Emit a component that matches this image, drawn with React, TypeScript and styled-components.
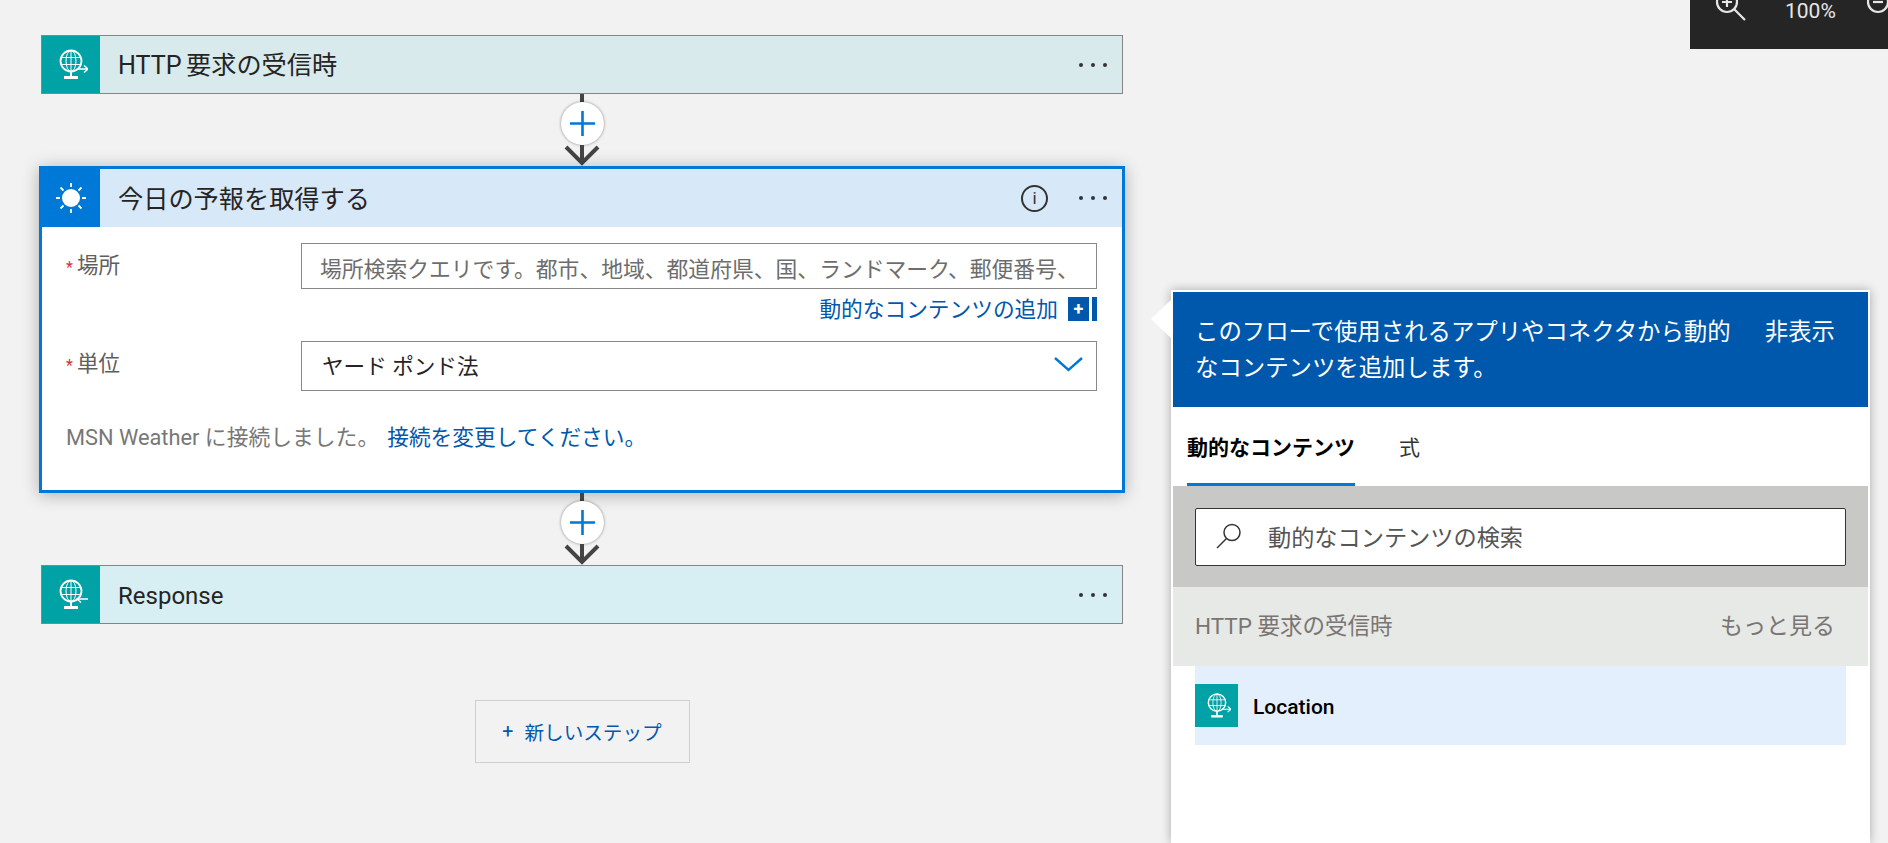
import styled, { createGlobalStyle } from "styled-components";

const Global = createGlobalStyle`
  html, body { margin: 0; padding: 0; background: #f2f2f2; }
  body {
    font-family: Roboto, "Noto Sans CJK JP", sans-serif;
    color: #252423;
  }
  * { box-sizing: border-box; }
`;

const Page = styled.div`
  position: relative;
  width: 1888px;
  height: 843px;
  overflow: hidden;
  display: flex;
  background: #f2f2f2;
`;

const ZoomBar = styled.div`
  position: absolute;
  top: 0;
  right: 0;
  width: 198px;
  height: 49px;
  background: #252525;
  color: #e6e6e6;
  font-size: 21px;
  line-height: 22px;
  overflow: hidden;
`;

const ZoomIcon = styled.svg`
  position: absolute;
  top: -10px;
  left: 24px;
`;

const ZoomOutIcon = styled.svg`
  position: absolute;
  top: -10px;
  left: 172px;
`;

const ZoomValue = styled.span`
  position: absolute;
  top: 0;
  left: 95px;
`;

const FlowColumn = styled.div`
  width: 1086px;
  margin-left: 39px;
  padding-top: 35px;
  display: flex;
  flex-direction: column;
  align-items: stretch;
  flex-shrink: 0;
`;

const Card = styled.div<{ $bg: string }>`
  margin: 0 2px;
  height: 59px;
  display: flex;
  align-items: center;
  background: ${({ $bg }) => $bg};
  border: 1px solid #858585;
`;

const IconBox = styled.div<{ $bg: string; $w?: number }>`
  width: ${({ $w }) => $w ?? 58}px;
  align-self: stretch;
  flex-shrink: 0;
  display: flex;
  align-items: center;
  justify-content: center;
  background: ${({ $bg }) => $bg};
`;

const Title = styled.div`
  flex: 1;
  padding: 3px 0 0 18px;
  font-size: 25.2px;
  line-height: 30px;
  word-spacing: -2px;
  color: #252423;
  white-space: nowrap;
`;

const LatinTitle = styled(Title)`
  font-size: 24px;
`;

const Dots = styled.div`
  display: flex;
  gap: 8px;
  margin-right: 15px;
`;

const Dot = styled.i`
  width: 4px;
  height: 4px;
  border-radius: 50%;
  background: #333;
`;

const SelectedCard = styled.div`
  height: 327px;
  border: 3px solid #0078d7;
  background: #fff;
  box-shadow: 0 2px 16px rgba(0, 0, 0, 0.28);
`;

const SelectedHeader = styled.div`
  height: 58px;
  display: flex;
  align-items: center;
  background: #d7e8f8;
`;

const InfoIcon = styled.div`
  width: 27px;
  height: 27px;
  margin-right: 31px;
  border: 2px solid #333;
  border-radius: 50%;
  font-size: 17px;
  line-height: 22px;
  text-align: center;
  color: #333;
`;

const CardBody = styled.div`
  padding: 16px 25px 0 24px;
`;

const FieldRow = styled.div`
  display: flex;
  align-items: flex-start;
`;

const Label = styled.div`
  width: 235px;
  flex-shrink: 0;
  padding-top: 8px;
  font-size: 21.5px;
  line-height: 30px;
  color: #605e5c;
`;

const Required = styled.span`
  color: #d13438;
  font-size: 16px;
  margin-right: 4px;
`;

const TextBox = styled.div`
  flex: 1;
  height: 46px;
  display: flex;
  align-items: center;
  padding: 3px 0 0 18px;
  border: 1px solid #8a8886;
  font-size: 21.8px;
  color: #6d6d6d;
  white-space: nowrap;
  overflow: hidden;
`;

const SelectBox = styled(TextBox)`
  height: 50px;
  justify-content: space-between;
  padding: 0 13px 4px 20px;
  font-size: 21.6px;
  color: #252423;
`;

const AddRow = styled.div`
  display: flex;
  justify-content: flex-end;
  align-items: center;
  height: 24px;
  margin: 8px 0 20px;
`;

const BlueLink = styled.span`
  color: #0058ad;
  font-size: 21.7px;
  white-space: nowrap;
`;

const AddLink = styled(BlueLink)`
  margin-top: -4px;
`;

const AddButton = styled.span`
  width: 29px;
  height: 24px;
  margin-left: 10px;
  display: flex;
  justify-content: space-between;
`;

const AddPlus = styled.span`
  width: 21px;
  background: #0058ad;
  color: #fff;
  font-size: 18px;
  font-weight: 700;
  line-height: 23px;
  text-align: center;
`;

const AddEdge = styled.span`
  width: 5px;
  background: #0058ad;
`;

const ConnectionNote = styled.div`
  margin-top: 32px;
  display: flex;
  gap: 8px;
  font-size: 21.8px;
  line-height: 30px;
  color: #777;
`;

const Connector = styled.div`
  height: 72px;
  display: flex;
  flex-direction: column;
  align-items: center;
`;

const Stem = styled.div`
  width: 4px;
  height: 8px;
  background: #444;
`;

const PlusCircle = styled.div`
  width: 43px;
  height: 43px;
  border-radius: 50%;
  background: #fff;
  box-shadow: 0 0 3px rgba(0, 0, 0, 0.45);
  display: flex;
  align-items: center;
  justify-content: center;
`;

const NewStep = styled.div`
  align-self: center;
  width: 215px;
  height: 63px;
  margin-top: 76px;
  display: flex;
  align-items: center;
  justify-content: center;
  gap: 11px;
  border: 1px solid #cfcfcf;
  color: #0058ad;
  font-size: 19.6px;
`;

const Panel = styled.div`
  position: relative;
  width: 699px;
  margin: 290px 0 0 46px;
  height: 553px;
  flex-shrink: 0;
  background: #fff;
  border: 2px solid #fff;
  border-bottom: 0;
  box-shadow: 0 0 10px rgba(0, 0, 0, 0.3);
`;

const PanelArrow = styled.div`
  position: absolute;
  top: 8px;
  left: -22px;
  width: 0;
  height: 0;
  border-top: 19px solid transparent;
  border-bottom: 19px solid transparent;
  border-right: 20px solid #fff;
`;

const PanelHeader = styled.div`
  height: 115px;
  background: #0058ad;
  color: #fff;
  display: flex;
  justify-content: space-between;
  padding: 22px 33px 0 22px;
  font-size: 23.4px;
  line-height: 36px;
`;

const PanelIntro = styled.div`
  width: 545px;
`;

const Tabs = styled.div`
  height: 79px;
  padding-left: 14px;
  display: flex;
  gap: 44px;
`;

const Tab = styled.div<{ $active?: boolean }>`
  height: 79px;
  padding-top: 23px;
  font-size: 21px;
  line-height: 36px;
  font-weight: ${({ $active }) => ($active ? 700 : 400)};
  color: ${({ $active }) => ($active ? "#000" : "#333")};
  border-bottom: 3px solid ${({ $active }) => ($active ? "#0078d7" : "transparent")};
`;

const SearchWrap = styled.div`
  height: 101px;
  padding: 22px 22px 0;
  background: #c8c9c6;
`;

const SearchBox = styled.div`
  height: 58px;
  display: flex;
  align-items: center;
  gap: 26px;
  padding: 0 0 2px 20px;
  border: 1px solid #333;
  border-radius: 2px;
  background: #fff;
  font-size: 23.2px;
  color: #555;
`;

const SectionHeader = styled.div`
  height: 79px;
  padding: 0 33px 5px 22px;
  display: flex;
  align-items: center;
  justify-content: space-between;
  background: #e7e9e6;
  font-size: 22.5px;
  color: #7a7574;
`;

const MoreLink = styled.span`
  font-size: 23px;
`;

const TokenRow = styled.div`
  margin: 0 22px;
  height: 79px;
  display: flex;
  align-items: center;
  gap: 15px;
  background: #e3effd;
  font-size: 21px;
  font-weight: 500;
  color: #000;
`;

const TokenIcon = styled(IconBox)`
  height: 43px;
  align-self: center;
`;

const TokenName = styled.span`
  padding-top: 2px;
`;

function GlobeIcon({ size, back }: { size: number; back?: boolean }) {
  return (
    <svg width={size} height={size} viewBox="0 0 34 34" fill="none" stroke="#fff">
      <circle cx="17" cy="13" r="10.5" strokeWidth="1.8" />
      <ellipse cx="17" cy="13" rx="5" ry="10.5" strokeWidth="1" />
      <path d="M7 9.5h20M7 16.5h20M17 2.5v21" strokeWidth="1" />
      <path d="M17 24v4" strokeWidth="2" />
      <path d="M10 29.5h14" strokeWidth="3" />
      {back ? (
        <path d="M34 21H23M27 17.5 23 21l4 3.5" strokeWidth="1.4" />
      ) : (
        <path d="M23 21h11M30 17.5l4 3.5-4 3.5" strokeWidth="1.4" />
      )}
    </svg>
  );
}

function SunIcon() {
  return (
    <svg width="32" height="32" viewBox="0 0 32 32" fill="#fff" stroke="#fff">
      <circle cx="16" cy="16" r="9" stroke="none" />
      <path
        d="M16 1v4M16 27v4M1 16h4M27 16h4M5.5 5.5l3 3M23.5 23.5l3 3M5.5 26.5l3-3M23.5 8.5l3-3"
        strokeWidth="1.8"
      />
    </svg>
  );
}

function MoreDots() {
  return (
    <Dots>
      <Dot />
      <Dot />
      <Dot />
    </Dots>
  );
}

function StepConnector() {
  return (
    <Connector>
      <Stem />
      <PlusCircle>
        <svg width="27" height="27" viewBox="0 0 27 27" stroke="#0078d7" strokeWidth="2.6">
          <path d="M13.5 1v25M1 13.5h25" />
        </svg>
      </PlusCircle>
      <svg width="38" height="21" viewBox="0 0 38 21" fill="none" stroke="#444" strokeWidth="4">
        <path d="M19 0v18M3 2l16 16L35 2" />
      </svg>
    </Connector>
  );
}

export default function App() {
  return (
    <Page lang="ja">
      <Global />
      <FlowColumn>
        <Card $bg="#d9eaed">
          <IconBox $bg="#00a2a5">
            <GlobeIcon size={34} />
          </IconBox>
          <Title>HTTP 要求の受信時</Title>
          <MoreDots />
        </Card>
        <StepConnector />
        <SelectedCard>
          <SelectedHeader>
            <IconBox $bg="#0078d7" $w={58}>
              <SunIcon />
            </IconBox>
            <Title>今日の予報を取得する</Title>
            <InfoIcon>i</InfoIcon>
            <MoreDots />
          </SelectedHeader>
          <CardBody>
            <FieldRow>
              <Label>
                <Required>*</Required>場所
              </Label>
              <TextBox>場所検索クエリです。都市、地域、都道府県、国、ランドマーク、郵便番号、</TextBox>
            </FieldRow>
            <AddRow>
              <AddLink>動的なコンテンツの追加</AddLink>
              <AddButton>
                <AddPlus>+</AddPlus>
                <AddEdge />
              </AddButton>
            </AddRow>
            <FieldRow>
              <Label>
                <Required>*</Required>単位
              </Label>
              <SelectBox>
                ヤード ポンド法
                <svg width="29" height="16" viewBox="0 0 29 16" fill="none" stroke="#0078d7" strokeWidth="2.4">
                  <path d="M1 2l13.5 12L28 2" />
                </svg>
              </SelectBox>
            </FieldRow>
            <ConnectionNote>
              <span>MSN Weather に接続しました。</span>
              <BlueLink>接続を変更してください。</BlueLink>
            </ConnectionNote>
          </CardBody>
        </SelectedCard>
        <StepConnector />
        <Card $bg="#d7eff2">
          <IconBox $bg="#00a2a5">
            <GlobeIcon size={34} back />
          </IconBox>
          <LatinTitle>Response</LatinTitle>
          <MoreDots />
        </Card>
        <NewStep>
          <span>+</span>
          <span>新しいステップ</span>
        </NewStep>
      </FlowColumn>

      <Panel>
        <PanelArrow />
        <PanelHeader>
          <PanelIntro>このフローで使用されるアプリやコネクタから動的なコンテンツを追加します。</PanelIntro>
          <span>非表示</span>
        </PanelHeader>
        <Tabs>
          <Tab $active>動的なコンテンツ</Tab>
          <Tab>式</Tab>
        </Tabs>
        <SearchWrap>
          <SearchBox>
            <svg width="26" height="26" viewBox="0 0 26 26" fill="none" stroke="#333" strokeWidth="1.5">
              <circle cx="16" cy="9.5" r="8" />
              <path d="M10.5 15.5 1 25" />
            </svg>
            動的なコンテンツの検索
          </SearchBox>
        </SearchWrap>
        <SectionHeader>
          <span>HTTP 要求の受信時</span>
          <MoreLink>もっと見る</MoreLink>
        </SectionHeader>
        <TokenRow>
          <TokenIcon $bg="#00a2a5" $w={43}>
            <GlobeIcon size={28} />
          </TokenIcon>
          <TokenName>Location</TokenName>
        </TokenRow>
      </Panel>

      <ZoomBar>
        <ZoomIcon width="34" height="34" viewBox="0 0 34 34" fill="none" stroke="#e6e6e6" strokeWidth="2.2">
          <circle cx="13" cy="12" r="10" />
          <path d="M13 7v10M8 12h10M20 19l11 11" />
        </ZoomIcon>
        <ZoomValue>100%</ZoomValue>
        <ZoomOutIcon width="34" height="34" viewBox="0 0 34 34" fill="none" stroke="#e6e6e6" strokeWidth="2.2">
          <circle cx="16" cy="12" r="10" />
          <path d="M11 12h10" />
        </ZoomOutIcon>
      </ZoomBar>
    </Page>
  );
}
